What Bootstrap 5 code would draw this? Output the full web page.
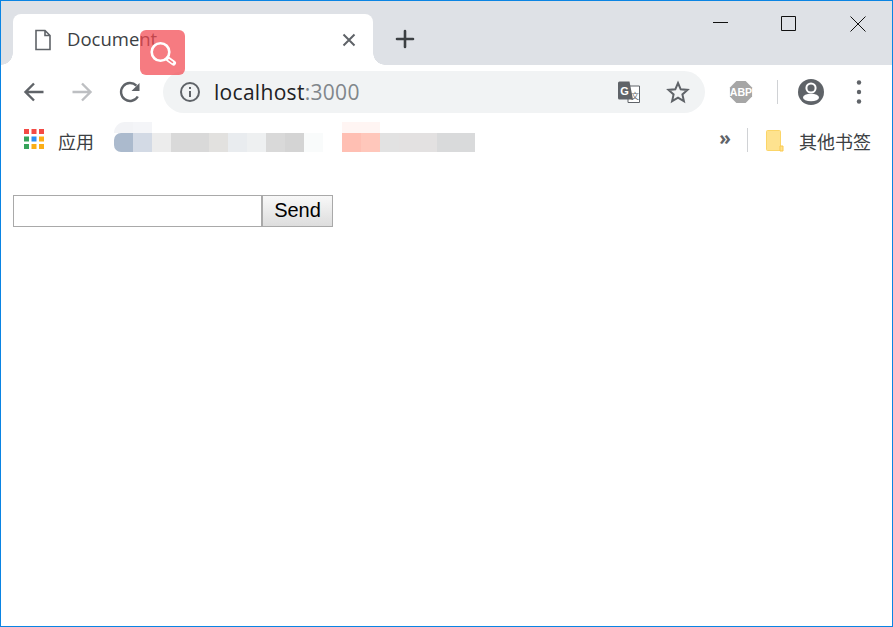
<!DOCTYPE html>
<html lang="zh">
<head>
<meta charset="utf-8">
<title>Document</title>
<link rel="stylesheet" href="https://cdn.jsdelivr.net/npm/bootstrap@5.3.0/dist/css/bootstrap.min.css">
<style>
html,body{height:100%;margin:0;background:#fff;overflow:hidden}
.win{height:627px;border:1px solid #0a84e3;position:relative;font-family:"Open Sans","Noto Sans","Noto Sans CJK SC",sans-serif;color:#3c4043}
.strip{height:64px;background:#dee1e6;padding-left:12px}
.tabx{width:360px;height:51px;margin-top:13px;background:#fff;border-radius:8px 8px 0 0;position:relative;padding-left:20px;padding-right:16px}
.tabx::before,.tabx::after{content:"";position:absolute;bottom:0;width:12px;height:12px}
.tabx::before{left:-12px;background:radial-gradient(circle at 0 0,#dee1e6 11.5px,#fff 12px)}
.tabx::after{right:-12px;background:radial-gradient(circle at 100% 0,#dee1e6 11.5px,#fff 12px)}
.tabt{font-size:18.5px;margin-left:14px;color:#3c4043;line-height:1}
.plus{margin:26px 0 0 20px}
.wbtn{width:68px;height:46px}
.wshift{margin-right:1px}
.tool{height:54px;padding-left:9px}
.slot{width:48px;height:48px}
.omni{width:542px;height:42px;background:#f1f3f4;border-radius:21px;margin-left:9px;padding:0 15px 0 16px}
.url{font-size:21px;margin-left:13px;color:#202124;line-height:1;letter-spacing:.3px}
.port{color:#80868b}
.stargap{margin-left:25px}
.vsep{width:1px;height:24px;background:#d0d2d5}
.abpgap{margin-left:12px}
.sepl{margin-left:12px}
.slotr{margin-left:9px}
.marks{height:47px;padding:3px 21px 0 23px;font-size:18px;line-height:1}
.appsi{margin-top:7px}
.mtxt{margin:11px 0 0 14px}
.blur{width:361px;margin-left:20px}
.blurtop{height:11px}
.blurrow{height:19px}
.pxb{width:19px;height:100%}
.c1{background:#abbacd;border-radius:7px 0 0 7px}.c2{background:#d3dae5}.c3{background:#ececec}.c4{background:#d9d9d9}.c4b{background:#d4d4d4}.c5{background:#e2e1df}.c6{background:#e9ecef}.c7{background:#eef0f1}.c8{background:#f9fbfb}.c10{background:#ffbfb3}.c11{background:#ffc7bb}.c12{background:#e2e2e2}.c13{background:#e3e1e1}.c14{background:#d9dadb}
.t1{background:#f2f3f6;border-radius:19px 0 0 0}.t2{background:#f4f5f8}.t0{background:#fff}.t3{background:#fff5f3}
.tgap{margin-left:190px}
.chev{font-size:19px;font-weight:700;color:#5f6368;margin-top:7px}
.vsepb{margin:6px 0 0 16px}
.fold{margin:8px 0 0 18px}
.mtxt2{margin:11px 0 0 15px}
.sendrow{padding:29px 0 0 12px}
.inp{width:249px;height:32px;border:1px solid #a9a9a9;background:#fff;padding:1px 2px;border-radius:0;font:20px "Liberation Sans",Arial,sans-serif;outline:0}
.sendb{width:71px;height:32px;border:1px solid #a9a9a9;border-radius:0;padding:0 0 2px;background:linear-gradient(#f8f8f8,#dddddd);font:20px "Liberation Sans",Arial,sans-serif;color:#000}
.lens{position:absolute;left:139px;top:29px;width:45px;height:45px;border-radius:6px;background:rgba(243,72,80,.72)}
.svgt{font-family:"Liberation Sans",Arial,sans-serif;font-weight:700}
.svgc{font-family:"Noto Sans CJK SC",sans-serif}
</style>
</head>
<body>
<div class="win d-flex flex-column">
  <div class="strip d-flex flex-shrink-0">
    <div class="tabx d-flex align-items-center">
      <svg width="20" height="24" viewBox="0 0 20 24" fill="none" stroke="#5f6368" stroke-width="1.6"><path d="M3 2.500h9l5 5V21.500H3zM12 2.500v5h5"/></svg>
      <span class="tabt">Document</span>
      <svg class="ms-auto" width="16" height="16" viewBox="0 0 16 16" stroke="#5f6368" stroke-width="2"><path d="M2.500 2.500l11 11M13.500 2.500l-11 11"/></svg>
    </div>
    <svg class="plus" width="24" height="24" viewBox="0 0 24 24" stroke="#3c4043" stroke-width="2.600" stroke-linecap="round"><path d="M12 4v16M4 12h16"/></svg>
    <div class="ms-auto d-flex align-self-start">
      <div class="wbtn d-flex align-items-center justify-content-center"><svg width="16" height="16" stroke="#111" stroke-width="1"><path d="M0 6.500h15"/></svg></div>
      <div class="wbtn wshift d-flex align-items-center justify-content-center"><svg width="16" height="16" fill="none" stroke="#111" stroke-width="1"><path d="M.5.500h14v14H.500z"/></svg></div>
      <div class="wbtn d-flex align-items-center justify-content-center"><svg width="16" height="16" stroke="#111" stroke-width="1"><path d="M.5.500l15 15M15.500.500l-15 15"/></svg></div>
    </div>
  </div>

  <div class="tool d-flex align-items-center flex-shrink-0">
    <div class="slot d-flex align-items-center justify-content-center"><svg width="24" height="24" viewBox="0 0 24 24" fill="none" stroke="#5f6368" stroke-width="2.400"><path d="M21.500 12H4M12 3.500L3.500 12l8.500 8.500"/></svg></div>
    <div class="slot d-flex align-items-center justify-content-center"><svg width="24" height="24" viewBox="0 0 24 24" fill="none" stroke="#bdbfc2" stroke-width="2.400"><path d="M2.500 12H20M12 3.500l8.500 8.500-8.500 8.500"/></svg></div>
    <div class="slot d-flex align-items-center justify-content-center"><svg width="24" height="24" viewBox="0 0 24 24" fill="none" stroke="#5f6368" stroke-width="2.400"><path d="M19.800 16.500A9 9 0 1 1 18.400 5.600"/><path d="M21.500 3v8h-8z" fill="#5f6368" stroke="none"/></svg></div>
    <div class="omni d-flex align-items-center">
      <svg width="22" height="22" viewBox="0 0 22 22" fill="none" stroke="#5f6368" stroke-width="2"><circle cx="11" cy="11" r="9"/><path d="M11 10v6M11 6v2"/></svg>
      <span class="url">localhost<span class="port">:3000</span></span>
      <svg class="ms-auto" width="24" height="24" viewBox="0 0 24 24"><path d="M11 6h11.500v16.500H11z" fill="#fff" stroke="#5f6368"/><path d="M2.500 1.500h10l3.500 18H2.500a1.500 1.500 0 0 1-1.500-1.500V3a1.500 1.500 0 0 1 1.500-1.500z" fill="#5f6368"/><text class="svgt" x="3.300" y="14.500" font-size="11" fill="#fff">G</text><text class="svgc" x="14" y="19" font-size="8" fill="#5f6368">文</text></svg>
      <svg class="stargap" width="24" height="24" viewBox="0 0 24 24" fill="none" stroke="#5f6368" stroke-width="2"><path d="M12 3l2.700 6.300 6.800.6-5.100 4.500 1.500 6.700-5.900-3.500-5.900 3.500 1.500-6.700L2.500 9.900l6.800-.6z"/></svg>
    </div>
    <div class="slot abpgap d-flex align-items-center justify-content-center flex-shrink-0"><svg width="24" height="24" viewBox="0 0 26 26"><path d="M8 1h10l7 7v10l-7 7H8l-7-7V8z" fill="#a6a6a6"/><text class="svgt" x="13" y="17.500" font-size="11.500" fill="#fff" text-anchor="middle">ABP</text></svg></div>
    <div class="vsep sepl flex-shrink-0"></div>
    <div class="slot slotr d-flex align-items-center justify-content-center flex-shrink-0"><svg width="26" height="26" viewBox="0 0 26 26"><circle cx="13" cy="13" r="13" fill="#5f6368"/><circle cx="13" cy="9" r="4.600" fill="#5f6368" stroke="#fff" stroke-width="2"/><ellipse cx="13" cy="18.500" rx="8" ry="3.800" fill="#fff"/></svg></div>
    <div class="slot d-flex align-items-center justify-content-center flex-shrink-0"><svg width="6" height="24" viewBox="0 0 6 24" fill="#5f6368"><circle cx="3" cy="2.500" r="2.200"/><circle cx="3" cy="12" r="2.200"/><circle cx="3" cy="21.500" r="2.200"/></svg></div>
  </div>

  <div class="marks d-flex align-items-start flex-shrink-0">
    <svg class="appsi flex-shrink-0" width="20" height="20" viewBox="0 0 20 20"><rect width="5" height="5" fill="#f44a45"/><rect x="7.500" width="5" height="5" fill="#f44a45"/><rect x="15" width="5" height="5" fill="#f44a45"/><rect y="7.500" width="5" height="5" fill="#36a35a"/><rect x="7.500" y="7.500" width="5" height="5" fill="#2d8ef2"/><rect x="15" y="7.500" width="5" height="5" fill="#fbae17"/><rect y="15" width="5" height="5" fill="#36a35a"/><rect x="7.500" y="15" width="5" height="5" fill="#fbae17"/><rect x="15" y="15" width="5" height="5" fill="#fbae17"/></svg>
    <span class="mtxt">应用</span>
    <div class="blur flex-shrink-0">
      <div class="blurtop d-flex"><div class="pxb t1"></div><div class="pxb t2"></div><div class="pxb t3 tgap"></div><div class="pxb t3"></div></div>
      <div class="blurrow d-flex">
        <div class="pxb c1"></div><div class="pxb c2"></div><div class="pxb c3"></div><div class="pxb c4"></div><div class="pxb c4"></div><div class="pxb c5"></div><div class="pxb c6"></div><div class="pxb c7"></div><div class="pxb c4"></div><div class="pxb c4b"></div><div class="pxb c8"></div><div class="pxb t0"></div><div class="pxb c10"></div><div class="pxb c11"></div><div class="pxb c12"></div><div class="pxb c13"></div><div class="pxb c13"></div><div class="pxb c14"></div><div class="pxb c14"></div>
      </div>
    </div>
    <span class="chev ms-auto">»</span>
    <div class="vsep vsepb flex-shrink-0"></div>
    <svg class="fold flex-shrink-0" width="18" height="22" viewBox="0 0 18 22"><path d="M1.500.500h12a1 1 0 0 1 1 1v19h-13a1 1 0 0 1-1-1v-18a1 1 0 0 1 1-1z" fill="#fee28f" stroke="#fbd568"/><path d="M14 21v-5h3v5z" fill="#fee28f" stroke="#fbc94f"/></svg>
    <span class="mtxt2">其他书签</span>
  </div>

  <form class="sendrow d-flex">
    <input class="inp" type="text" aria-label="message">
    <button class="sendb" type="button">Send</button>
  </form>

  <div class="lens">
    <svg width="45" height="45" viewBox="0 0 45 45" fill="none" stroke="#fff"><circle cx="20.500" cy="22" r="8.800" stroke-width="2.600"/><path d="M28 29l5.500 4" stroke-width="5" stroke-linecap="round"/><path d="M29 29.800l3.500 2.500" stroke="#f67b81" stroke-width="1.600" stroke-linecap="round"/></svg>
  </div>
</div>
</body>
</html>
